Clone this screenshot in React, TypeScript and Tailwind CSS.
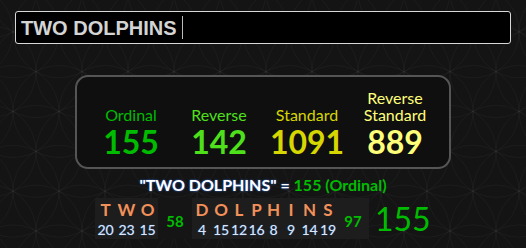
import React from 'react'

const ciphers = [
    { name: ['Ordinal'], value: 155, color: 'text-[#00bb00]' },
    { name: ['Reverse'], value: 142, color: 'text-[#4fe01c]' },
    { name: ['Standard'], value: 1091, color: 'text-[#d6d600]' },
    { name: ['Reverse', 'Standard'], value: 889, color: 'text-[#ffff7a]' },
]

// [letter, value, cell width]
const words: { letters: [string, number, number][]; sum: number }[] = [
    { letters: [['T', 20, 21], ['W', 23, 21], ['O', 15, 21]], sum: 58 },
    {
        letters: [
            ['D', 4, 20], ['O', 15, 18], ['L', 12, 18], ['P', 16, 17],
            ['H', 8, 17], ['I', 9, 18], ['N', 14, 19], ['S', 19, 18],
        ],
        sum: 97,
    },
]

// faint flower-of-life pattern behind everything
function FlowerBg() {
    const r = 46
    const h = (r * Math.sqrt(3)) / 2
    const circles: { x: number; y: number }[] = []
    for (let j = -1; j < 9; j++) {
        for (let i = -1; i < 14; i++) {
            circles.push({ x: i * r + (j % 2 ? r / 2 : 0) - 10, y: j * h - 8 })
        }
    }
    return (
        <svg className="absolute inset-0 h-full w-full" aria-hidden>
            {circles.map((c, k) => (
                <circle key={k} cx={c.x} cy={c.y} r={r} fill="none" stroke="#ffffff" strokeOpacity={0.035} strokeWidth={1} />
            ))}
        </svg>
    )
}

export default function App() {
    return (
        <div className="relative h-[248px] w-full overflow-hidden bg-[#141414] font-['Lato',sans-serif]">
            <FlowerBg />
            <div className="relative flex flex-col">
                {/* Search input */}
                <div className="mx-[15px] mt-[11px] flex h-[33px] items-center rounded-[3px] border border-[#d8d8d8] bg-black pl-[5px]">
                    <span className="font-['Liberation_Sans',Arial,sans-serif] text-[20px] font-bold text-[#d4d4d4]">TWO DOLPHINS</span>
                    <span className="ml-[5px] h-[23px] w-px bg-[#bbbbbb]" />
                </div>

                {/* Cipher totals */}
                <div className="mx-auto mt-[31px] grid h-[94px] w-[376px] grid-cols-4 items-end rounded-[13px] border-2 border-[#555555] bg-[#0f0f0f] px-[10px] pb-[8px]">
                    {ciphers.map((c) => (
                        <div key={c.value} className={`flex flex-col items-center ${c.color}`}>
                            {c.name.map((n) => (
                                <span key={n} className="text-[16px] leading-[17px]">{n}</span>
                            ))}
                            <span className="mt-[2px] text-[32px] font-bold leading-[34px]">{c.value}</span>
                        </div>
                    ))}
                </div>

                {/* Phrase summary */}
                <div className="mt-[6px] text-center text-[16px] font-bold leading-[20px] text-white [text-shadow:0_0_2px_#2f7fff]">
                    "TWO DOLPHINS" = <span className="text-[#00bb00] [text-shadow:none]">155 (Ordinal)</span>
                </div>

                {/* Letter breakdown */}
                <div className="mt-[3px] flex items-center pl-[95px]">
                    <div className="flex h-[41px] items-stretch bg-[#1d1d1d]">
                        {words.map((w, wi) => (
                            <React.Fragment key={wi}>
                                <div className="flex items-stretch">
                                    {w.letters.map(([l, n, cw], li) => (
                                        <div key={li} className="flex flex-col items-center pt-[2px]" style={{ width: cw }}>
                                            <span className="text-[17px] font-bold leading-[19px] text-[#f2905a]">{l}</span>
                                            <span className="pt-[2px] text-[14px] leading-[17px] text-[#dde6f0] [text-shadow:0_0_1px_#3b82f6]">{n}</span>
                                        </div>
                                    ))}
                                </div>
                                <div
                                    className={`flex items-center justify-center pt-[5px] text-[15px] font-bold text-[#00bb00] ${wi === 0 ? 'w-[34px] bg-[#151515]' : 'w-[32px]'}`}
                                >
                                    {w.sum}
                                </div>
                            </React.Fragment>
                        ))}
                    </div>
                    <span className="ml-[6px] text-[32px] leading-[40px] text-[#00bb00]">155</span>
                </div>
            </div>
        </div>
    )
}
